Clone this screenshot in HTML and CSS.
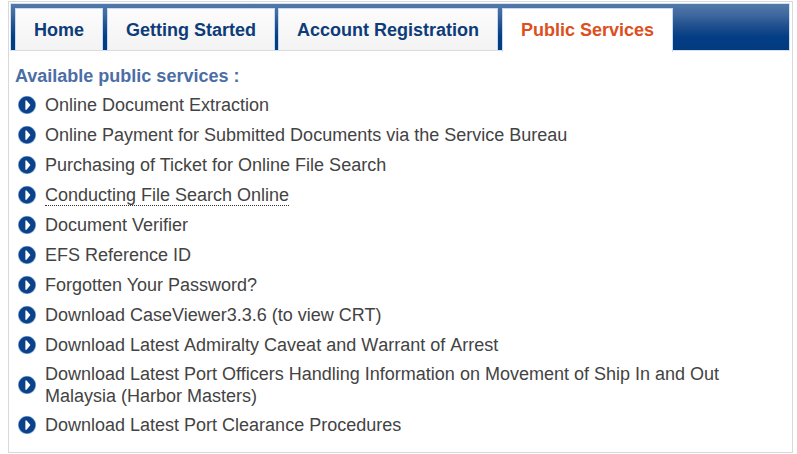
FILE: index.html
```
<!DOCTYPE html>
<html lang="en">
<head>
<meta charset="utf-8">
<title>Public Services</title>
<link rel="stylesheet" href="styles.css">
</head>
<body>
<svg class="defs" aria-hidden="true">
  <symbol id="arrow" viewBox="0 0 18 18">
    <circle cx="9" cy="9" r="9.1" fill="#8db3dc"/>
    <circle cx="9" cy="9" r="8.4" fill="#0b428a"/>
    <path d="M7.4 4.4H8.6L12.4 9.1L8.6 13.8H7.4Z" fill="#fff"/>
  </symbol>
</svg>
<main class="panel">
  <nav class="tabs">
    <a class="tab home">Home</a>
    <a class="tab started">Getting Started</a>
    <a class="tab account">Account Registration</a>
    <a class="tab active">Public Services</a>
  </nav>
  <h2 class="heading">Available public services :</h2>
  <ul class="services">
    <li><svg class="bullet"><use href="#arrow"/></svg><a>Online Document Extraction</a></li>
    <li><svg class="bullet"><use href="#arrow"/></svg><a>Online Payment for Submitted Documents via the Service Bureau</a></li>
    <li><svg class="bullet"><use href="#arrow"/></svg><a>Purchasing of Ticket for Online File Search</a></li>
    <li><svg class="bullet"><use href="#arrow"/></svg><a class="hovered">Conducting File Search Online</a></li>
    <li><svg class="bullet"><use href="#arrow"/></svg><a>Document Verifier</a></li>
    <li><svg class="bullet"><use href="#arrow"/></svg><a>EFS Reference ID</a></li>
    <li><svg class="bullet"><use href="#arrow"/></svg><a>Forgotten Your Password?</a></li>
    <li><svg class="bullet"><use href="#arrow"/></svg><a>Download CaseViewer3.3.6 (to view CRT)</a></li>
    <li><svg class="bullet"><use href="#arrow"/></svg><a class="unkerned">Download Latest Admiralty Caveat and Warrant of Arrest</a></li>
    <li><svg class="bullet"><use href="#arrow"/></svg><a>Download Latest Port Officers Handling Information on Movement of Ship In and Out<br>Malaysia (Harbor Masters)</a></li>
    <li><svg class="bullet"><use href="#arrow"/></svg><a>Download Latest Port Clearance Procedures</a></li>
  </ul>
</main>
</body>
</html>
```
FILE: styles.css
```
* { box-sizing: border-box; }

body {
  margin: 0;
  background: #fff;
  font: 18px/22px "Liberation Sans", Arial, sans-serif;
  color: #434343;
}

.defs { display: none; }

.panel {
  width: 785px;
  height: 452px;
  margin: 1px 0 0 8px;
  padding: 1px;
  border: 1px solid #d9d9d9;
}

.tabs {
  display: flex;
  width: 780px;
  height: 48px;
  padding: 4px 0 0 4px;
  border: 1px solid #d3e1ef;
  background: linear-gradient(#5379a9 0%, #40699f 22%, #1d4d8d 50%, #033d83 72%, #033b80 100%);
}

.tab {
  height: 43px;
  border: 1px solid #c5dbf3;
  border-bottom: 1px solid #d9dde2;
  background: linear-gradient(#fcfcfc, #f3f3f3);
  font-weight: bold;
  line-height: 42px;
  text-align: center;
  color: #0d3c78;
}

.home { width: 88px; margin-right: 4px; }
.started { width: 168px; margin-right: 3px; }
.account { width: 220px; margin-right: 4px; }

.active {
  width: 171px;
  height: 44px;
  border-bottom: 0;
  background: #fff;
  color: #dc4f20;
}

.heading {
  margin: 14px 0 3px 5px;
  font-size: 18px;
  line-height: 22px;
  color: #4b6ea6;
}

.services {
  margin: 0;
  padding: 0 0 0 8px;
  list-style: none;
}

.services li {
  display: flex;
  align-items: center;
  min-height: 30px;
  padding: 3px 0;
}

.bullet {
  flex: none;
  width: 18px;
  height: 18px;
  margin-right: 9px;
}

.hovered {
  height: 22px;
  border-bottom: 1px dotted #333;
}

.unkerned { font-kerning: none; }
```
